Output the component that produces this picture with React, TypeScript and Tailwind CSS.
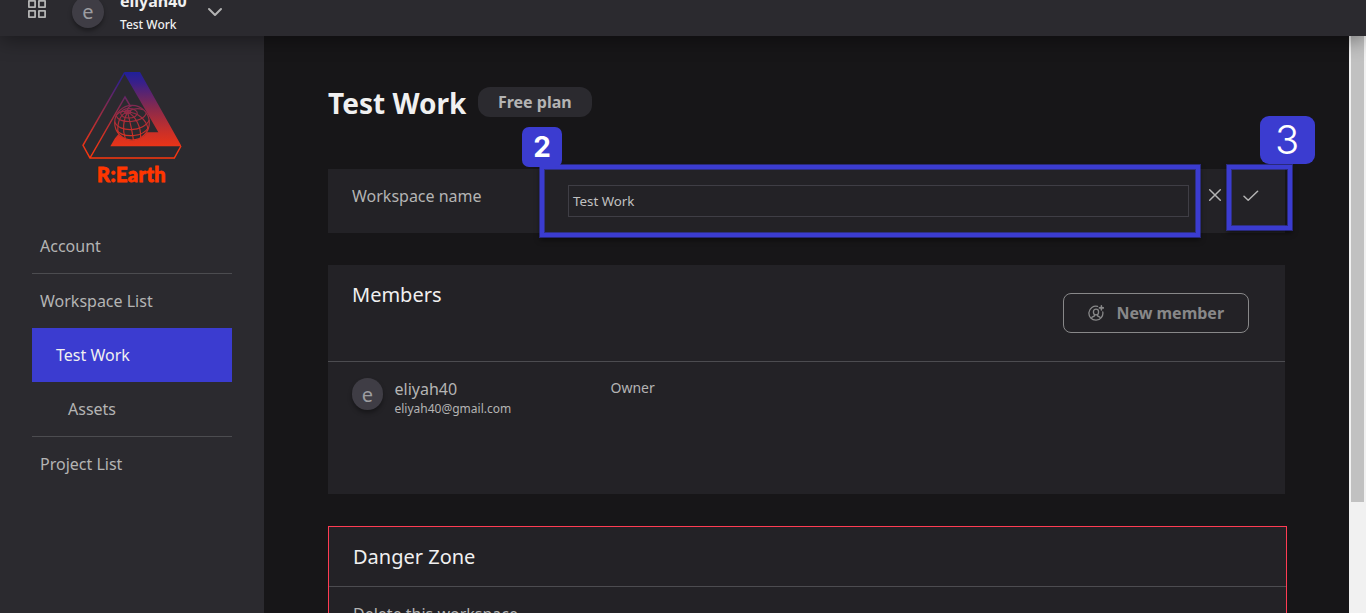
import React from "react";

function Header() {
  return (
    <header className="relative z-20 flex h-9 shrink-0 overflow-visible bg-[#2b2a2f] shadow-[0_4px_20px_rgba(0,0,0,0.4)]">
      <div className="flex h-9 w-full items-start overflow-hidden">
        <svg className="-mt-0.5 ml-[27px] h-5 w-5 shrink-0" viewBox="0 0 20 20" fill="none" stroke="#b3b3b3" strokeWidth="1.8" strokeLinejoin="round">
          <rect x="1.9" y="2.9" width="6.2" height="6.2" />
          <rect x="11.9" y="2.9" width="6.2" height="6.2" />
          <rect x="1.9" y="12.9" width="6.2" height="6.2" />
          <rect x="11.9" y="12.9" width="6.2" height="6.2" />
        </svg>
        <div className="-mt-1 ml-[25px] flex h-8 w-8 shrink-0 items-center justify-center rounded-full bg-[#3f3d45] text-xl leading-8 text-[#9d9da1] shadow-[0_3px_4px_rgba(0,0,0,0.35)]">
          e
        </div>
        <div className="-mt-[10px] ml-4 text-[#f0f0f0]">
          <div className="text-base leading-[22px] font-bold">eliyah40</div>
          <div className="mt-0.5 text-xs leading-[22px] font-medium">Test Work</div>
        </div>
        <svg className="mt-[5px] ml-5 h-4 w-4" viewBox="0 0 16 16" fill="none" stroke="#b3b3b3" strokeWidth="2" strokeLinecap="round" strokeLinejoin="round">
          <path d="M2 4l6 6 6-6" />
        </svg>
      </div>
    </header>
  );
}

function Logo() {
  return (
    <svg className="ml-[82px] block" width="100" height="116" viewBox="36 33 300 348">
      <defs>
        <linearGradient id="brand" gradientUnits="userSpaceOnUse" x1="0" y1="36" x2="0" y2="296">
          <stop offset="0" stopColor="#20209a" />
          <stop offset="0.12" stopColor="#38208b" />
          <stop offset="0.4" stopColor="#84294f" />
          <stop offset="0.7" stopColor="#cc3027" />
          <stop offset="0.9" stopColor="#f13513" />
          <stop offset="1" stopColor="#fc360c" />
        </linearGradient>
      </defs>
      <path d="M163 36H210L333 256V259H121L135 235L150 217H265L165 44Z" fill="url(#brand)" />
      <g fill="none" stroke="url(#brand)" strokeWidth="4.5">
        <path d="M164 38L39 256L60 294H313L333 258" />
        <path d="M60 294L165 111L182 140" />
      </g>
      <circle cx="186" cy="188" r="53" fill="#2b2a2f" />
      <g fill="none" stroke="url(#brand)" strokeWidth="3.4">
        <circle cx="186" cy="188" r="52" />
        <ellipse cx="173" cy="156" rx="9" ry="5" />
        <ellipse cx="177" cy="160" rx="25" ry="14" />
        <path d="M139 167C145 193 220 190 229 159" />
        <path d="M134 185C145 219 222 216 238 180" />
        <path d="M140 211C163 237 220 229 235 203" />
        <path d="M173 156C151 161 141 187 144 218" />
        <path d="M173 156C159 179 157 211 166 236" />
        <path d="M173 156C178 181 187 211 190 240" />
        <path d="M173 156C197 169 213 199 212 233" />
        <path d="M173 156C204 157 230 180 234 207" />
        <path d="M173 156C190 144 205 144 219 149" />
        <path d="M173 156C170 145 176 139 187 136" />
        <path d="M173 156C156 151 145 158 138 167" />
      </g>
      <text x="81" y="365" textLength="206" lengthAdjust="spacing" fontFamily="Lato, sans-serif" fontWeight="900" fontSize="60" fill="#ff3600" stroke="#ff3600" strokeWidth="2.4">
        R:Earth
      </text>
    </svg>
  );
}

function Sidebar() {
  return (
    <aside className="w-[264px] shrink-0 bg-[#2b2a2f] pt-[35px]">
      <Logo />
      <nav className="mx-8 mt-8 text-base leading-[54px] text-[#b4b4b4]">
        <div className="h-[55px] border-b border-[#4c4c50] pl-2">Account</div>
        <div className="h-[54px] pl-2">Workspace List</div>
        <div className="h-[54px] bg-[#3b3cd0] pl-6 text-[#f0f0f0]">Test Work</div>
        <div className="h-[55px] border-b border-[#4c4c50] pl-9">Assets</div>
        <div className="h-[54px] pl-2">Project List</div>
      </nav>
    </aside>
  );
}

function NameRow() {
  return (
    <section className="relative mt-[50px] flex h-16 w-[957px] bg-[#232226]">
      <div className="w-60 pt-4 pl-6 text-base leading-[22px] text-[#b4b4b4]">Workspace name</div>
      <div className="mt-4 h-8 w-[621px] border border-[#3f3e45] pl-1 text-[13.33px] leading-[30px] text-[#c0c0c0]">Test Work</div>
      <svg className="mt-[18px] ml-[18px] h-4 w-4" viewBox="0 0 16 16" fill="none" stroke="#b4b4b4" strokeWidth="1.5" strokeLinecap="round">
        <path d="M2.7 2.7l10.6 10.6M13.3 2.7L2.7 13.3" />
      </svg>
      <svg className="mt-[18px] ml-5 h-4 w-4" viewBox="0 0 16 16" fill="none" stroke="#b4b4b4" strokeWidth="1.5" strokeLinecap="round" strokeLinejoin="round">
        <path d="M1 9.2l4.2 4L14.6 4.2" />
      </svg>
      <div className="absolute top-[-4px] left-[212px] h-[72px] w-[660px] border-4 border-[#3b3cd0] shadow-[0_0_0_1px_rgba(59,60,208,0.55),inset_0_0_0_1px_rgba(59,60,208,0.55),0_3px_5px_rgba(0,0,0,0.5)]" />
      <div className="absolute top-[-42px] left-[194px] flex h-10 w-10 items-center justify-center rounded-[7px] bg-[#3b3cd0] font-[Inter] text-[28px] leading-10 font-bold text-white">
        <span className="-mt-px">2</span>
      </div>
      <div className="absolute top-[-4px] left-[899px] h-[65px] w-[65px] border-4 border-[#3b3cd0] shadow-[0_0_0_1px_rgba(59,60,208,0.55),inset_0_0_0_1px_rgba(59,60,208,0.55),0_3px_5px_rgba(0,0,0,0.5)]" />
      <div className="absolute top-[-53px] left-[932px] flex h-12 w-[55px] items-center justify-center rounded-[9px] bg-[#3b3cd0] font-[Inter] text-[40px] leading-[48px] font-[350] text-white">
        <span className="-ml-px">3</span>
      </div>
    </section>
  );
}

function Members() {
  return (
    <section className="mt-8 h-[229px] w-[957px] bg-[#232226]">
      <div className="flex h-[97px] justify-between border-b border-[#4c4c50] pr-9 pl-6">
        <h2 className="mt-4 text-xl leading-7 text-[#f0f0f0]">Members</h2>
        <button className="mt-7 flex h-10 w-[186px] items-center rounded-lg border border-[#888889] pl-6 text-base font-bold text-[#888889]">
          <svg className="h-4 w-4" viewBox="0 0 16 16" fill="none" stroke="currentColor" strokeWidth="1.3" strokeLinecap="round" strokeLinejoin="round">
            <path d="M9.6 1.4A7 7 0 1 0 14.8 7" />
            <path d="M13.4.9v4M11.4 2.9h4" strokeWidth="1.6" />
            <path d="M8 4.2c1.6 0 2.6 1.2 2.6 2.7S9.5 9.9 8 9.9 5.4 8.4 5.4 6.9 6.4 4.2 8 4.2zM6.5 9.8v1.1L3.8 12.4M9.5 9.8v1.1l2.7 1.5" />
          </svg>
          <span className="ml-[12.4px]">New member</span>
        </button>
      </div>
      <div className="flex pt-4 pl-6 text-[#b4b4b4]">
        <div className="flex h-8 w-[31px] items-center justify-center rounded-full bg-[#3f3d45] pt-0.5 text-xl leading-8 text-[#9d9da1] shadow-[0_3px_4px_rgba(0,0,0,0.35)]">e</div>
        <div className="ml-[11.5px] w-[216px]">
          <div className="text-base leading-[22px]">eliyah40</div>
          <div className="text-xs leading-[18px]">eliyah40@gmail.com</div>
        </div>
        <div className="text-sm leading-5">Owner</div>
      </div>
    </section>
  );
}

function DangerZone() {
  return (
    <section className="mt-8 h-40 w-[959px] shrink-0 border border-[#ff3c53] bg-[#232226]">
      <h2 className="h-[60px] border-b border-[#4c4c50] pl-6 text-xl leading-[60px] text-[#f0f0f0]">Danger Zone</h2>
      <p className="mt-4 pl-6 text-base leading-[22px] text-[#b4b4b4]">Delete this workspace</p>
    </section>
  );
}

export default function App() {
  return (
    <div className="flex h-[613px] w-[1366px] flex-col overflow-hidden bg-[#171618] font-['Noto_Sans',sans-serif]">
      <Header />
      <div className="flex h-[577px] overflow-hidden">
        <Sidebar />
        <main className="flex-1 overflow-hidden bg-[#171618] pt-[49px] pl-16">
          <div className="flex h-[34px] items-center">
            <h1 className="pt-0.5 text-[28px] leading-[34px] font-bold text-[#f0f0f0]">Test Work</h1>
            <span className="ml-[11.5px] flex h-[30px] w-[114px] items-center justify-center rounded-xl bg-[#2b2a2f] text-base font-bold text-[#b4b4b4]">Free plan</span>
          </div>
          <NameRow />
          <Members />
          <DangerZone />
        </main>
        <div className="w-[17px] shrink-0 bg-[#f1f1f1] px-0.5">
          <div className="h-[466px] w-[13px] bg-[#c1c1c1]" />
        </div>
      </div>
    </div>
  );
}
